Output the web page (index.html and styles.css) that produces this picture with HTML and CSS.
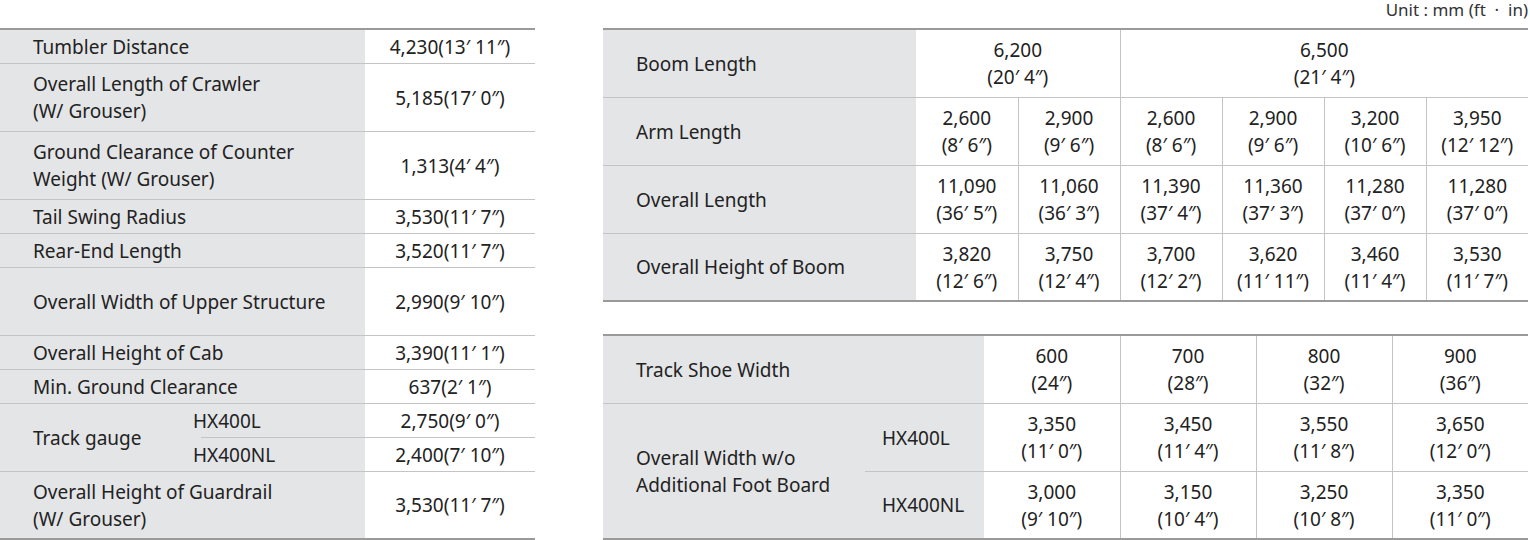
FILE: index.html
```html
<!DOCTYPE html>
<html>
<head>
<meta charset="utf-8">
<link rel="stylesheet" href="styles.css">
</head>
<body>
<div class="page">
  <div class="unit">Unit : mm (ft &nbsp;·&nbsp; in)</div>
  <div class="layout">
    <table class="spec left">
      <colgroup><col class="c-a"><col class="c-b"><col class="c-v"></colgroup>
      <tr class="r1"><th colspan="2">Tumbler Distance</th><td>4,230(13′ 11″)</td></tr>
      <tr class="r2"><th colspan="2">Overall Length of Crawler<br>(W/ Grouser)</th><td>5,185(17′ 0″)</td></tr>
      <tr class="r2"><th colspan="2">Ground Clearance of Counter<br>Weight (W/ Grouser)</th><td>1,313(4′ 4″)</td></tr>
      <tr class="r1"><th colspan="2">Tail Swing Radius</th><td>3,530(11′ 7″)</td></tr>
      <tr class="r1"><th colspan="2">Rear-End Length</th><td>3,520(11′ 7″)</td></tr>
      <tr class="r2"><th colspan="2">Overall Width of Upper Structure</th><td>2,990(9′ 10″)</td></tr>
      <tr class="r1"><th colspan="2">Overall Height of Cab</th><td>3,390(11′ 1″)</td></tr>
      <tr class="r1"><th colspan="2">Min. Ground Clearance</th><td>637(2′ 1″)</td></tr>
      <tr class="r1"><th rowspan="2">Track gauge</th><th class="sub">HX400L</th><td>2,750(9′ 0″)</td></tr>
      <tr class="r1"><th class="sub">HX400NL</th><td>2,400(7′ 10″)</td></tr>
      <tr class="r2"><th colspan="2">Overall Height of Guardrail<br>(W/ Grouser)</th><td>3,530(11′ 7″)</td></tr>
    </table>
    <div class="right">
      <table class="spec boom">
        <colgroup><col class="c-l"><col class="c-n"><col class="c-n"><col class="c-n"><col class="c-n"><col class="c-n"><col class="c-n"></colgroup>
        <tr class="r2"><th>Boom Length</th><td colspan="2">6,200<br>(20′ 4″)</td><td colspan="4">6,500<br>(21′ 4″)</td></tr>
        <tr class="r2"><th>Arm Length</th><td>2,600<br>(8′ 6″)</td><td>2,900<br>(9′ 6″)</td><td>2,600<br>(8′ 6″)</td><td>2,900<br>(9′ 6″)</td><td>3,200<br>(10′ 6″)</td><td>3,950<br>(12′ 12″)</td></tr>
        <tr class="r2"><th>Overall Length</th><td>11,090<br>(36′ 5″)</td><td>11,060<br>(36′ 3″)</td><td>11,390<br>(37′ 4″)</td><td>11,360<br>(37′ 3″)</td><td>11,280<br>(37′ 0″)</td><td>11,280<br>(37′ 0″)</td></tr>
        <tr class="r2"><th>Overall Height of Boom</th><td>3,820<br>(12′ 6″)</td><td>3,750<br>(12′ 4″)</td><td>3,700<br>(12′ 2″)</td><td>3,620<br>(11′ 11″)</td><td>3,460<br>(11′ 4″)</td><td>3,530<br>(11′ 7″)</td></tr>
      </table>
      <table class="spec shoe">
        <colgroup><col class="c-la"><col class="c-lb"><col class="c-s"><col class="c-s"><col class="c-s"><col class="c-s"></colgroup>
        <tr class="r2"><th colspan="2">Track Shoe Width</th><td>600<br>(24″)</td><td>700<br>(28″)</td><td>800<br>(32″)</td><td>900<br>(36″)</td></tr>
        <tr class="r2"><th rowspan="2">Overall Width w/o<br>Additional Foot Board</th><th class="sub">HX400L</th><td>3,350<br>(11′ 0″)</td><td>3,450<br>(11′ 4″)</td><td>3,550<br>(11′ 8″)</td><td>3,650<br>(12′ 0″)</td></tr>
        <tr class="r2"><th class="sub">HX400NL</th><td>3,000<br>(9′ 10″)</td><td>3,150<br>(10′ 4″)</td><td>3,250<br>(10′ 8″)</td><td>3,350<br>(11′ 0″)</td></tr>
      </table>
    </div>
  </div>
</div>
</body>
</html>
```
FILE: styles.css
```css
html, body {
  margin: 0;
  padding: 0;
  background: #ffffff;
}
.page {
  width: 1530px;
  font-family: "Noto Sans", "Liberation Sans", sans-serif;
  color: #222222;
  font-size: 19px;
}
.unit {
  height: 28px;
  padding-right: 2px;
  text-align: right;
  font-size: 17px;
  line-height: 19px;
  color: #333333;
}
.layout {
  display: flex;
  align-items: flex-start;
  gap: 68px;
}
.spec {
  border-collapse: collapse;
  table-layout: fixed;
  border-top: 2px solid #9a9a9a;
  border-bottom: 2px solid #9a9a9a;
}
.spec th {
  background: #e4e5e7;
  font-weight: normal;
  text-align: left;
  padding: 2px 0 0 33px;
  border-bottom: 1px solid #c4c4c4;
  line-height: 27px;
  vertical-align: middle;
  white-space: nowrap;
}
.spec td {
  text-align: center;
  border-bottom: 1px solid #c4c4c4;
  line-height: 27px;
  padding: 2px 0 0 0;
  vertical-align: middle;
  white-space: nowrap;
}
.spec tr.r1 { height: 34px; }
.spec tr.r2 { height: 68px; }

.left { width: 535px; }
.left .c-a { width: 201px; }
.left .c-b { width: 164px; }
.left .c-v { width: 170px; }
.left th.sub { padding-left: 0; text-indent: -8px; }

.right {
  display: flex;
  flex-direction: column;
  gap: 32px;
  width: 925px;
}
.boom { width: 925px; }
.boom .c-l { width: 313px; }
.boom .c-n { width: 102px; }
.boom td + td { border-left: 1px solid #c4c4c4; }

.shoe { width: 925px; }
.shoe .c-la { width: 262px; }
.shoe .c-lb { width: 119px; }
.shoe .c-s { width: 136px; }
.shoe td + td { border-left: 1px solid #c4c4c4; }
.shoe th.sub { padding-left: 17px; }
```
